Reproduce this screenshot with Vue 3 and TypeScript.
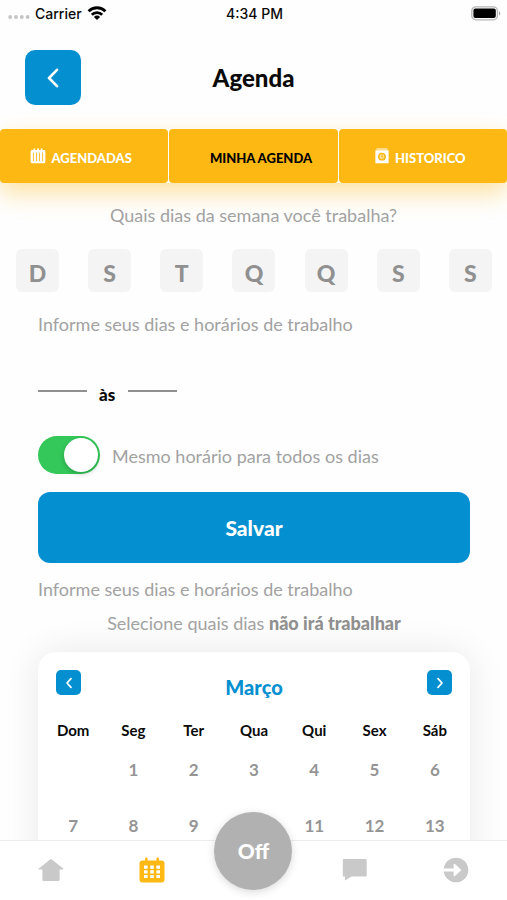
<script setup lang="ts">
import { ref } from 'vue'

interface WeekDay {
  letter: string
  name: string
}

const weekDays: WeekDay[] = [
  { letter: 'D', name: 'Domingo' },
  { letter: 'S', name: 'Segunda' },
  { letter: 'T', name: 'Terça' },
  { letter: 'Q', name: 'Quarta' },
  { letter: 'Q', name: 'Quinta' },
  { letter: 'S', name: 'Sexta' },
  { letter: 'S', name: 'Sábado' },
]
const headings: string[] = ['Dom', 'Seg', 'Ter', 'Qua', 'Qui', 'Sex', 'Sáb']
const weeks: (number | null)[][] = [
  [null, 1, 2, 3, 4, 5, 6],
  [7, 8, 9, 10, 11, 12, 13],
]

const selected = ref<boolean[]>(weekDays.map(() => false))
const sameSchedule = ref(true)
const start = ref('')
const end = ref('')

function toggleDay(index: number): void {
  selected.value[index] = !selected.value[index]
}
</script>

<template>
  <div class="app">
    <div class="status">
      <div class="carrier">
        <svg class="signal" width="22" height="6" viewBox="0 0 22 6" aria-hidden="true">
          <circle cx="2.2" cy="3" r="1.9" /><circle cx="8" cy="3" r="1.9" />
          <circle cx="13.8" cy="3" r="1.9" /><circle cx="19.6" cy="3" r="1.9" />
        </svg>
        <span>Carrier</span>
        <svg width="20" height="14" viewBox="0 0 20 14" fill="none" stroke="#000" stroke-width="2.8" aria-hidden="true">
          <path d="M1.6 5.2a12 12 0 0 1 16.8 0" />
          <path d="M4.8 8.7a7.4 7.4 0 0 1 10.4 0" />
          <path d="M10 14 6.9 10.9a4.4 4.4 0 0 1 6.2 0z" fill="#000" stroke="none" />
        </svg>
      </div>
      <span>4:34 PM</span>
      <svg class="battery" width="30" height="15" viewBox="0 0 30 15" aria-hidden="true">
        <rect x="0.8" y="0.8" width="25.6" height="13" rx="4" fill="#fff" stroke="#b5b5b5" stroke-width="1.3" />
        <rect x="2.4" y="2.6" width="22.4" height="9.4" rx="2" fill="#000" />
        <path d="M28 5.2v4.4c1.6-.6 1.6-3.8 0-4.4z" fill="#a0a0a0" />
      </svg>
    </div>

    <header class="header">
      <button class="back" type="button" aria-label="Voltar">
        <svg width="14" height="20" viewBox="0 0 14 20" fill="none" stroke="#fff" stroke-width="2.6" stroke-linecap="round" stroke-linejoin="round">
          <path d="M11 1.8 3 10l8 8.2" />
        </svg>
      </button>
      <h1>Agenda</h1>
    </header>

    <nav class="tabs" aria-label="Agenda">
      <button type="button" class="tab">
        <svg width="16" height="16" viewBox="0 0 16 16" aria-hidden="true">
          <path fill="#fff" d="M2 2h1.6V.6h1.6V2h1.9V.6h1.8V2h1.9V.6h1.6V2H14a1.4 1.4 0 0 1 1.4 1.4v10.4a1.4 1.4 0 0 1-1.4 1.4H2a1.4 1.4 0 0 1-1.4-1.4V3.4A1.4 1.4 0 0 1 2 2z" />
          <path stroke="#fdb813" stroke-width="0.9" fill="none" d="M3.4 4.6v8.6M6.5 4.6v8.6M9.5 4.6v8.6M12.6 4.6v8.6" />
        </svg>
        AGENDADAS
      </button>
      <button type="button" class="tab active">
        <span class="blank"></span>
        MINHA AGENDA
      </button>
      <button type="button" class="tab">
        <svg width="16" height="16" viewBox="0 0 16 16" aria-hidden="true">
          <path fill="#fff" d="M2.4.4h11.2v1.2H2.4zM1.4 2.2h13.2v13H1.4z" />
          <circle cx="8" cy="8.7" r="3.9" fill="#fdb813" />
          <circle cx="8" cy="8.7" r="2.4" fill="#ffe3a0" />
          <path d="M8 6.8v2.2h1.5" fill="none" stroke="#fdb813" stroke-width="1.1" />
        </svg>
        HISTORICO
      </button>
    </nav>

    <main class="content">
      <p class="text centered">Quais dias da semana você trabalha?</p>
      <div class="days">
        <button
          v-for="(day, i) in weekDays"
          :key="day.name"
          type="button"
          class="day"
          :class="{ chosen: selected[i] }"
          :aria-label="day.name"
          :aria-pressed="selected[i]"
          @click="toggleDay(i)"
        >
          {{ day.letter }}
        </button>
      </div>

      <div class="form">
        <p class="text">Informe seus dias e horários de trabalho</p>
        <div class="hours">
          <input v-model="start" class="hour" type="text" aria-label="Início" />
          <span class="until">às</span>
          <input v-model="end" class="hour" type="text" aria-label="Fim" />
        </div>
        <label class="same">
          <input v-model="sameSchedule" class="switch" type="checkbox" role="switch" />
          <span class="text">Mesmo horário para todos os dias</span>
        </label>
        <button class="save" type="button">Salvar</button>
        <p class="text">Informe seus dias e horários de trabalho</p>
        <p class="text centered pick">Selecione quais dias <strong>não irá trabalhar</strong></p>

        <section class="calendar">
          <div class="month">
            <button class="arrow" type="button" aria-label="Mês anterior">
              <svg width="8" height="12" viewBox="0 0 8 12" fill="none" stroke="#fff" stroke-width="1.7" stroke-linecap="round" stroke-linejoin="round">
                <path d="M6 1.6 2 6l4 4.4" />
              </svg>
            </button>
            <h2>Março</h2>
            <button class="arrow" type="button" aria-label="Próximo mês">
              <svg width="8" height="12" viewBox="0 0 8 12" fill="none" stroke="#fff" stroke-width="1.7" stroke-linecap="round" stroke-linejoin="round">
                <path d="M2 1.6 6 6l-4 4.4" />
              </svg>
            </button>
          </div>
          <table>
            <thead>
              <tr>
                <th v-for="name in headings" :key="name" scope="col">{{ name }}</th>
              </tr>
            </thead>
            <tbody>
              <tr v-for="(week, w) in weeks" :key="w">
                <td v-for="(date, d) in week" :key="d">{{ date }}</td>
              </tr>
            </tbody>
          </table>
        </section>
      </div>
    </main>

    <nav class="bottom" aria-label="Principal">
      <a href="#inicio" aria-label="Início">
        <svg width="26" height="26" viewBox="0 0 26 26" fill="#c9c9c9">
          <path d="M12.2 2.4a1.2 1.2 0 0 1 1.6 0l11.4 9.2c.4.4.3.9-.3.9h-3.300v10.200a1.300 1.300 0 0 1-1.300 1.300H5.700a1.300 1.300 0 0 1-1.300-1.300V12.500H1.100c-.6 0-.7-.5-.3-.9z" />
        </svg>
      </a>
      <a href="#agenda" aria-label="Agenda">
        <svg width="26" height="26" viewBox="0 0 26 26">
          <path fill="#fdb813" d="M3.500 3.500H6V1.800a1.300 1.300 0 0 1 2.600 0v1.700h8.800V1.800a1.300 1.300 0 0 1 2.600 0v1.700h2.500a3 3 0 0 1 3 3v16a3 3 0 0 1-3 3h-19a3 3 0 0 1-3-3v-16a3 3 0 0 1 3-3z" />
          <path fill="#fff" d="M5 8.500h3.600v3.200H5zM11.200 8.500h3.600v3.200h-3.600zM17.400 8.500H21v3.200h-3.600zM5 13.200h3.600v3.200H5zM11.200 13.200h3.600v3.200h-3.600zM17.400 13.200H21v3.200h-3.600zM5 17.900h3.600v3.200H5zM11.200 17.900h3.600v3.200h-3.600zM17.400 17.900H21v3.200h-3.600z" />
        </svg>
      </a>
      <div class="slot">
        <button class="off" type="button">Off</button>
      </div>
      <a href="#mensagens" aria-label="Mensagens">
        <svg width="26" height="26" viewBox="0 0 26 26" fill="#c9c9c9">
          <path d="M2 2h21.500a1.200 1.200 0 0 1 1.200 1.200v15.200a1.200 1.200 0 0 1-1.200 1.200H9.500L3 23.400v-3.800H2a1.200 1.200 0 0 1-1.200-1.200V3.200A1.200 1.200 0 0 1 2 2z" />
        </svg>
      </a>
      <a href="#sair" aria-label="Sair">
        <svg width="26" height="26" viewBox="0 0 26 26">
          <circle cx="13" cy="13" r="12.300" fill="#c9c9c9" />
          <path fill="#fff" d="M.4 11.600H10.600V7.600a.8.8 0 0 1 1.300-.6l6 5.400a.8.8 0 0 1 0 1.200l-6 5.400a.8.8 0 0 1-1.300-.6v-4H.4z" />
        </svg>
      </a>
    </nav>
  </div>
</template>

<style>
body {
  margin: 0;
  background: #fff;
}
</style>

<style scoped>
* {
  box-sizing: border-box;
}

.app {
  display: flex;
  flex-direction: column;
  height: 100vh;
  overflow: hidden;
  background: #fefefe;
  color: #0a0a0a;
  font-family: Lato, 'Open Sans', sans-serif;
}

h1,
h2,
p {
  margin: 0;
}

button {
  border: 0;
  padding: 0;
  font-family: inherit;
  cursor: pointer;
}

.status {
  flex: none;
  display: grid;
  grid-template-columns: 1fr auto 1fr;
  align-items: center;
  height: 26px;
  padding: 0 6px 0 8px;
  font-family: Inter, Roboto, sans-serif;
  font-size: 14px;
  font-weight: 500;
}

.carrier {
  display: flex;
  align-items: center;
  gap: 5px;
}

.signal {
  fill: #c4c4c4;
  margin-top: 7px;
}

.battery {
  justify-self: end;
}

.header {
  flex: none;
  display: grid;
  grid-template-columns: 1fr auto 1fr;
  align-items: center;
  padding: 24px 25px;
}

.back {
  display: flex;
  align-items: center;
  justify-content: center;
  width: 56px;
  height: 55px;
  border-radius: 10px;
  background: #0490d0;
}

h1 {
  font-size: 24px;
  line-height: 28px;
  font-weight: 900;
}

.tabs {
  flex: none;
  display: grid;
  grid-template-columns: repeat(3, 1fr);
  gap: 1px;
  border-radius: 4px;
  box-shadow: 0 10px 24px rgba(253, 184, 19, 0.4);
}

.tab {
  display: flex;
  align-items: center;
  justify-content: center;
  gap: 5px;
  height: 54px;
  padding: 4px 6px 0 0;
  border-radius: 4px;
  background: #fdb813;
  color: #fff;
  font-size: 13px;
  font-weight: 900;
}

.tab svg {
  margin-bottom: 4px;
}

.tab.active {
  color: #000;
}

.blank {
  width: 16px;
}

.content {
  flex: 1;
  min-height: 0;
  overflow-y: auto;
  scrollbar-width: none;
  padding-top: 20px;
}

.text {
  color: #a2a2a2;
  font-size: 18px;
  line-height: 24px;
}

.text strong {
  color: #8f8f8f;
  font-weight: 900;
}

.centered {
  text-align: center;
}

.days {
  display: flex;
  justify-content: space-between;
  padding: 22px 15px 20px 16px;
}

.day {
  width: 43px;
  height: 43px;
  padding-top: 4px;
  border-radius: 6px;
  background: #f4f4f4;
  color: #909090;
  font-size: 23px;
  font-weight: 900;
}

.day.chosen {
  background: #0490d0;
  color: #fff;
}

.form {
  padding: 0 37px 0 38px;
}

.hours {
  display: flex;
  align-items: flex-end;
  gap: 12px;
  margin-top: 32px;
}

.hour {
  width: 49px;
  height: 24px;
  margin-bottom: 16px;
  padding: 0;
  border: 0;
  border-bottom: 2px solid #8f8f8f;
  background: transparent;
  font: inherit;
  outline: 0;
}

.until {
  width: 17px;
  margin-bottom: 1px;
  font-size: 17px;
  line-height: 24px;
  font-weight: 900;
}

.same {
  display: flex;
  align-items: center;
  gap: 12px;
  margin-top: 28px;
}

.same .text {
  padding-top: 2px;
}

.switch {
  flex: none;
  appearance: none;
  display: flex;
  align-items: center;
  width: 62px;
  height: 38px;
  margin: 0;
  padding: 2px;
  border-radius: 19px;
  background: #d8d8d8;
  cursor: pointer;
}

.switch::before {
  content: '';
  width: 34px;
  height: 34px;
  border-radius: 50%;
  background: #fff;
  box-shadow: 0 2px 5px rgba(0, 0, 0, 0.2);
}

.switch:checked {
  justify-content: flex-end;
  background: #34c759;
}

.save {
  display: block;
  width: 100%;
  height: 71px;
  margin: 18px 0 14px;
  border-radius: 12px;
  background: #0490d0;
  color: #fff;
  font-size: 21px;
  font-weight: 900;
}

.pick {
  margin-top: 10px;
}

.calendar {
  margin-top: 17px;
  padding: 18px 5px 60px;
  border-radius: 18px;
  background: #fff;
  box-shadow: 0 0 36px rgba(0, 0, 0, 0.09);
}

.month {
  display: flex;
  align-items: flex-start;
  justify-content: space-between;
  padding: 0 13px;
}

.arrow {
  display: flex;
  align-items: center;
  justify-content: center;
  width: 25px;
  height: 25px;
  border-radius: 5px;
  background: #0490d0;
}

h2 {
  padding-top: 5px;
  color: #0490d0;
  font-size: 20px;
  line-height: 24px;
  font-weight: 900;
}

table {
  width: 100%;
  margin-top: 19px;
  border-collapse: collapse;
  table-layout: fixed;
}

th {
  height: 24px;
  padding: 0;
  font-size: 15px;
  line-height: 24px;
  font-weight: 700;
}

td {
  height: 56px;
  padding: 0;
  color: #959595;
  font-size: 17px;
  font-weight: 700;
  line-height: 24px;
  text-align: center;
}

.bottom {
  flex: none;
  position: relative;
  display: grid;
  grid-template-columns: repeat(5, 1fr);
  align-items: center;
  height: 60px;
  padding-bottom: 2px;
  border-top: 1px solid #ededed;
  background: #fff;
}

.bottom a {
  display: flex;
  justify-content: center;
}

.slot {
  display: flex;
  justify-content: center;
}

.off {
  flex: none;
  width: 78px;
  height: 78px;
  margin: -48px 0 -10px;
  border-radius: 50%;
  background: #b1b1b1;
  box-shadow: 0 2px 8px rgba(0, 0, 0, 0.15);
  color: #fff;
  font-size: 21px;
  font-weight: 900;
}
</style>
